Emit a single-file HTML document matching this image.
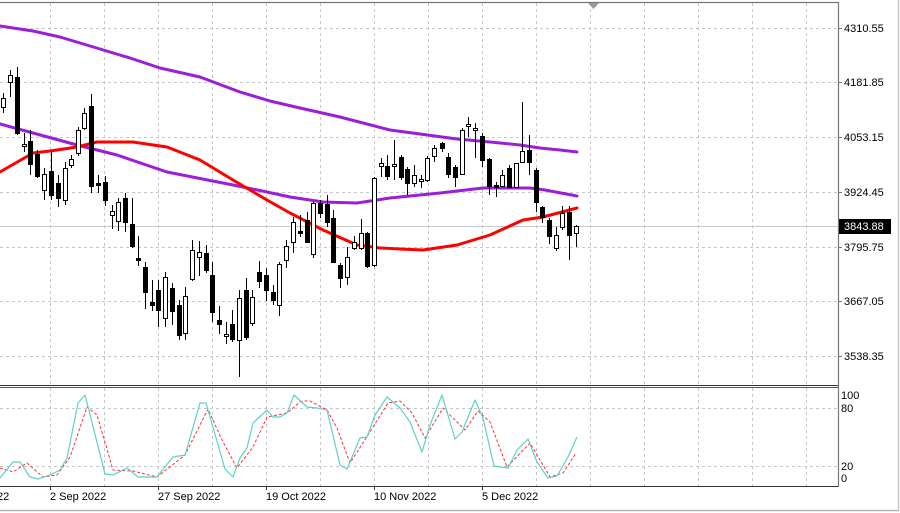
<!DOCTYPE html>
<html><head><meta charset="utf-8"><style>
html,body{margin:0;padding:0;background:#fff;}
svg{display:block;}
text{font-family:"Liberation Sans",sans-serif;font-size:11px;fill:#000;}
</style></head><body>
<svg width="900" height="513" viewBox="0 0 900 513" xmlns="http://www.w3.org/2000/svg">
<rect x="0" y="0" width="900" height="513" fill="#fff"/>
<!-- outer frame -->
<line x1="898.5" y1="0" x2="898.5" y2="511" stroke="#c8c8c8" stroke-width="1.5"/>
<line x1="0" y1="510.5" x2="899" y2="510.5" stroke="#b4b4b4" stroke-width="1.5"/>
<!-- grid -->
<g stroke="#c6c6c6" stroke-width="1" stroke-dasharray="3,3">
<path d="M50.5 3V385M104.5 3V385M158.5 3V385M212.5 3V385M266.5 3V385M320.5 3V385M374.5 3V385M428.5 3V385M482.5 3V385M536.5 3V385M590.5 3V385M644.5 3V385M698.5 3V385M752.5 3V385M806.5 3V385"/>
<path d="M50.5 388V486M104.5 388V486M158.5 388V486M212.5 388V486M266.5 388V486M320.5 388V486M374.5 388V486M428.5 388V486M482.5 388V486M536.5 388V486M590.5 388V486M644.5 388V486M698.5 388V486M752.5 388V486M806.5 388V486"/>
<path d="M0 28.5H838M0 82.5H838M0 137.5H838M0 192.5H838M0 247.5H838M0 301.5H838M0 356.5H838"/>
<path d="M0 408.5H838M0 466.5H838"/>
</g>
<line x1="0" y1="226.5" x2="838" y2="226.5" stroke="#c8c8c8"/>
<!-- borders -->
<line x1="0" y1="2.5" x2="838" y2="2.5" stroke="#777" stroke-width="1.2"/>
<line x1="0" y1="385.5" x2="838" y2="385.5" stroke="#333"/>
<line x1="0" y1="387.5" x2="838" y2="387.5" stroke="#555"/>
<line x1="0" y1="486.5" x2="838" y2="486.5" stroke="#333"/>
<line x1="838.5" y1="2" x2="838.5" y2="487" stroke="#777" stroke-width="1.2"/>
<polygon points="588,3 599,3 593.5,9" fill="#999"/>
<!-- MAs -->
<g fill="none" stroke-linejoin="round" stroke-linecap="round">
<polyline stroke="#9a1fd6" stroke-width="3" points="0,26 33,31 60,37 100,49 130,58 160,68 200,77 240,92 270,101 300,108 340,117 390,130 420,134 457,139 490,142 520,145 540,148 560,150 577,152"/>
<polyline stroke="#9a1fd6" stroke-width="3" points="0,124 33,133 77,145 117,155 167,172 233,185 267,192 290,197 323,202 357,203 390,198 440,193 483,188 530,188 545,190 577,196"/>
<polyline stroke="#f00" stroke-width="3" points="0,172 33,153 50,151 77,147 97,142 133,142 167,147 200,160 233,180 267,200 290,213 323,230 357,245 380,248 400,249 423,250 457,245 490,235 523,220 543,217 577,208"/>
</g>
<!-- candles -->
<g id="c" stroke="#000" stroke-width="1"></g>
<g stroke="#000" stroke-width="1" shape-rendering="crispEdges">
<path d="M3.5 93V113M10.5 70V97M17.5 67V135M24.5 133V152M30.5 130V175M37.5 150V178M44.5 168V200M51.5 152V200M58.5 175V207M65.5 162V205M71.5 155V168M78.5 127V156M84.5 108V130M91.5 94V193M98.5 175V193M105.5 176V206M112.5 205V229M118.5 198V231M125.5 193V232M132.5 198V248M138.5 236V266M145.5 262V309M152.5 280V311M158.5 280V327M165.5 272V327M172.5 283V325M179.5 300V340M185.5 287V340M192.5 240V281M199.5 241V276M206.5 245V273M212.5 262V322M219.5 306V334M226.5 322V344M232.5 310V342M239.5 290V377M246.5 278V340M252.5 290V326M259.5 261V288M266.5 268V301M273.5 285V305M279.5 262V316M286.5 240V268M293.5 217V253M300.5 215V237M307.5 212V243M313.5 202V258M320.5 200V218M327.5 195V227M333.5 210V262M340.5 263V288M347.5 247V285M354.5 236V250M361.5 219V250M367.5 232V268M374.5 177V267M381.5 158V177M387.5 155V180M394.5 140V180M401.5 155V180M407.5 167V195M414.5 165V187M421.5 175V188M427.5 156V182M434.5 145V162M442.5 142V152M448.5 153V178M455.5 165V187M462.5 128V175M468.5 117V137M475.5 123V158M482.5 133V167M489.5 158V195M496.5 182V197M502.5 170V187M509.5 165V188M516.5 163V187M522.5 102V163M529.5 135V175M536.5 168V212M542.5 206V223M549.5 218V244M556.5 227V251M562.5 206V230M569.5 206V260M576.5 225V247"/>
</g>
<g stroke="#000" stroke-width="1" fill="#fff" shape-rendering="crispEdges">
<rect x="1.5" y="98.5" width="4" height="9"/><rect x="8.5" y="75.5" width="4" height="7"/><rect x="22.5" y="144.5" width="4" height="2"/><rect x="42.5" y="174.5" width="4" height="16"/><rect x="63.5" y="168.5" width="4" height="32"/><rect x="69.5" y="159.5" width="4" height="6"/><rect x="76.5" y="130.5" width="4" height="23"/><rect x="82.5" y="113.5" width="4" height="15"/><rect x="110.5" y="211.5" width="4" height="4"/><rect x="116.5" y="202.5" width="4" height="19"/><rect x="163.5" y="277.5" width="4" height="41"/><rect x="183.5" y="296.5" width="4" height="37"/><rect x="190.5" y="250.5" width="4" height="29"/><rect x="197.5" y="252.5" width="4" height="5"/><rect x="224.5" y="334.5" width="4" height="2"/><rect x="237.5" y="298.5" width="4" height="42"/><rect x="250.5" y="297.5" width="4" height="26"/><rect x="277.5" y="264.5" width="4" height="41"/><rect x="284.5" y="246.5" width="4" height="14"/><rect x="291.5" y="222.5" width="4" height="20"/><rect x="311.5" y="203.5" width="4" height="51"/><rect x="345.5" y="257.5" width="4" height="20"/><rect x="352.5" y="242.5" width="4" height="6"/><rect x="359.5" y="233.5" width="4" height="15"/><rect x="372.5" y="178.5" width="4" height="87"/><rect x="379.5" y="163.5" width="4" height="3"/><rect x="392.5" y="164.5" width="4" height="2"/><rect x="412.5" y="175.5" width="4" height="8"/><rect x="419.5" y="179.5" width="4" height="2"/><rect x="425.5" y="158.5" width="4" height="22"/><rect x="432.5" y="148.5" width="4" height="8"/><rect x="460.5" y="130.5" width="4" height="44"/><rect x="466.5" y="124.5" width="4" height="2"/><rect x="473.5" y="128.5" width="4" height="2"/><rect x="500.5" y="175.5" width="4" height="11"/><rect x="514.5" y="163.5" width="4" height="24"/><rect x="520.5" y="151.5" width="4" height="11"/><rect x="554.5" y="235.5" width="4" height="13"/><rect x="560.5" y="213.5" width="4" height="14"/><rect x="574.5" y="226.5" width="4" height="7"/>
</g>
<g stroke="#000" stroke-width="1" fill="#000" shape-rendering="crispEdges">
<rect x="15.5" y="77.5" width="4" height="56"/><rect x="28.5" y="141.5" width="4" height="23"/><rect x="35.5" y="154.5" width="4" height="22"/><rect x="49.5" y="171.5" width="4" height="24"/><rect x="56.5" y="183.5" width="4" height="15"/><rect x="89.5" y="106.5" width="4" height="80"/><rect x="96.5" y="183.5" width="4" height="2"/><rect x="103.5" y="182.5" width="4" height="18"/><rect x="123.5" y="198.5" width="4" height="24"/><rect x="130.5" y="224.5" width="4" height="22"/><rect x="136.5" y="258.5" width="4" height="2"/><rect x="143.5" y="267.5" width="4" height="25"/><rect x="150.5" y="302.5" width="4" height="3"/><rect x="156.5" y="290.5" width="4" height="20"/><rect x="170.5" y="288.5" width="4" height="23"/><rect x="177.5" y="305.5" width="4" height="30"/><rect x="204.5" y="253.5" width="4" height="17"/><rect x="210.5" y="275.5" width="4" height="37"/><rect x="217.5" y="320.5" width="4" height="4"/><rect x="230.5" y="324.5" width="4" height="15"/><rect x="244.5" y="290.5" width="4" height="47"/><rect x="257.5" y="272.5" width="4" height="9"/><rect x="264.5" y="275.5" width="4" height="15"/><rect x="271.5" y="292.5" width="4" height="8"/><rect x="298.5" y="231.5" width="4" height="2"/><rect x="305.5" y="220.5" width="4" height="22"/><rect x="318.5" y="203.5" width="4" height="10"/><rect x="325.5" y="204.5" width="4" height="18"/><rect x="331.5" y="218.5" width="4" height="44"/><rect x="338.5" y="265.5" width="4" height="13"/><rect x="365.5" y="233.5" width="4" height="33"/><rect x="385.5" y="166.5" width="4" height="10"/><rect x="399.5" y="157.5" width="4" height="20"/><rect x="405.5" y="169.5" width="4" height="14"/><rect x="440.5" y="143.5" width="4" height="5"/><rect x="446.5" y="157.5" width="4" height="17"/><rect x="453.5" y="167.5" width="4" height="10"/><rect x="480.5" y="136.5" width="4" height="24"/><rect x="487.5" y="159.5" width="4" height="27"/><rect x="494.5" y="185.5" width="4" height="2"/><rect x="507.5" y="168.5" width="4" height="19"/><rect x="527.5" y="150.5" width="4" height="12"/><rect x="534.5" y="170.5" width="4" height="32"/><rect x="540.5" y="207.5" width="4" height="10"/><rect x="547.5" y="220.5" width="4" height="16"/><rect x="567.5" y="212.5" width="4" height="23"/>
</g>
<!-- stochastic -->
<g fill="none" stroke-linejoin="round">
<polyline stroke="#ff3030" stroke-width="1" stroke-dasharray="3,2" points="0,468 13,472 27,463 43,477 57,475 70,457 87,407 97,415 113,470 133,471 157,477 185,455 208,409 222,440 237,468 253,447 267,417 287,413 300,402 303,401 310,401 327,410 337,428 350,463 368,435 388,403 400,401 412,413 425,438 443,408 465,430 478,411 490,422 507,467 530,443 550,477 563,473 576,453"/>
<polyline stroke="#5fd0c8" stroke-width="1.2" points="0,478 13,462 20,462 30,477 38,479 50,475 60,470 67,458 78,403 85,395 105,474 113,475 127,468 138,477 157,477 173,457 185,455 200,403 206,403 225,469 233,477 240,458 247,448 253,423 267,410 273,417 280,417 287,413 294,395 307,407 317,408 327,410 340,465 347,469 360,438 367,437 375,415 387,397 400,408 410,422 422,452 430,425 442,395 455,439 462,432 475,400 483,418 494,466 508,468 517,450 528,439 537,462 548,478 557,476 568,457 577,437"/>
</g>
<!-- price labels -->
<text x="844" y="32">4310.55</text>
<text x="844" y="86">4181.85</text>
<text x="844" y="141">4053.15</text>
<text x="844" y="196">3924.45</text>
<text x="844" y="251">3795.75</text>
<text x="844" y="305">3667.05</text>
<text x="844" y="360">3538.35</text>
<rect x="839" y="219" width="52" height="15" fill="#000"/>
<text x="844" y="230" style="fill:#fff">3843.88</text>
<g stroke="#777"><path d="M838 28.5h4M838 82.5h4M838 137.5h4M838 192.5h4M838 247.5h4M838 301.5h4M838 356.5h4"/></g>
<text x="841" y="399">100</text>
<text x="841" y="412">80</text>
<text x="841" y="470">20</text>
<text x="841" y="482">0</text>
<!-- dates -->
<g stroke="#333"><path d="M50.5 486v4M158.5 486v4M266.5 486v4M374.5 486v4M482.5 486v4"/></g>
<text x="-3" y="500">22</text>
<text x="50" y="500">2 Sep 2022</text>
<text x="158" y="500">27 Sep 2022</text>
<text x="266" y="500">19 Oct 2022</text>
<text x="374" y="500">10 Nov 2022</text>
<text x="482" y="500">5 Dec 2022</text>
</svg>
</body></html>
